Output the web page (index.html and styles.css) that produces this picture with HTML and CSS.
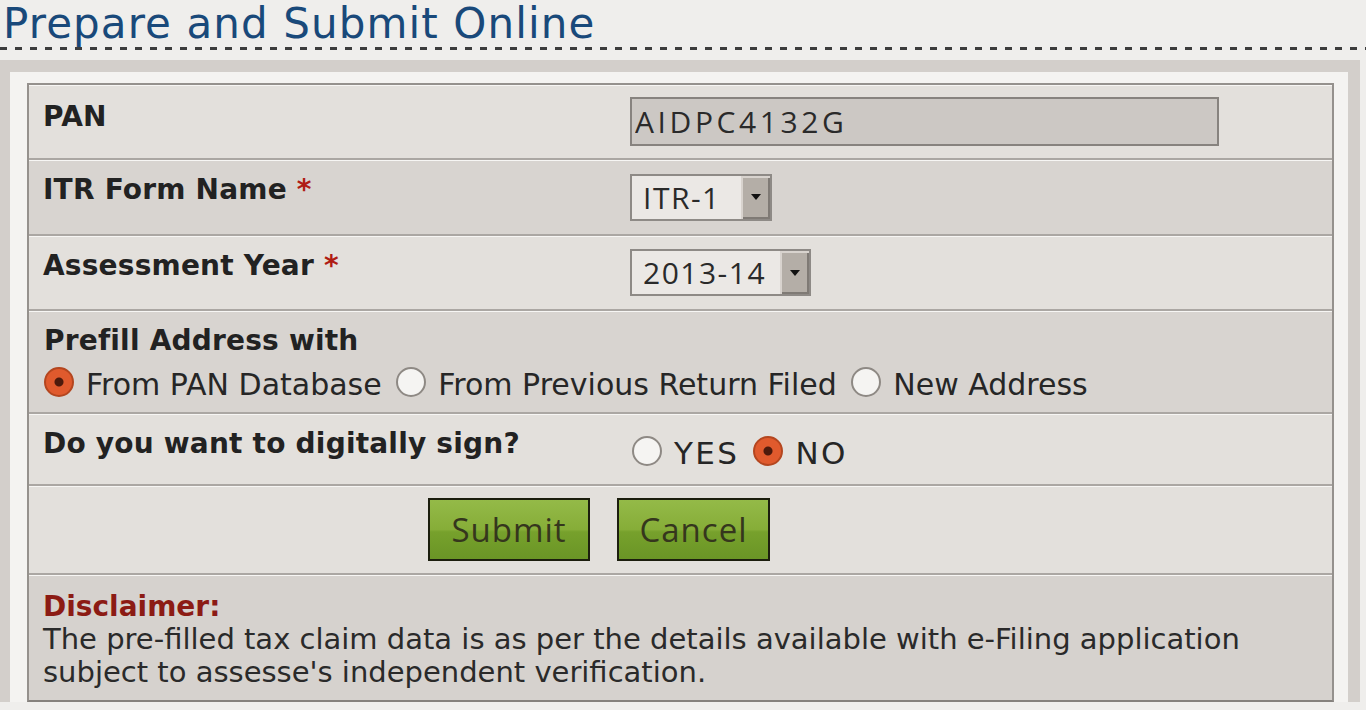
FILE: index.html
```html
<!DOCTYPE html>
<html lang="en">
<head>
  <meta charset="UTF-8">
  <title>Prepare and Submit Online</title>
  <link rel="stylesheet" href="styles.css">
</head>
<body>

  <h1 class="titulo">Prepare and Submit Online</h1>
  <div class="linea-punteada"></div>

  <div class="panel">
    <div class="tabla">

      <div class="fila clara f-pan">
        <div class="etiqueta">PAN</div>
        <div class="campo">
          <input class="pan" type="text" value="AIDPC4132G" readonly>
        </div>
      </div>

      <div class="fila oscura f-itr">
        <div class="etiqueta">ITR Form Name <span class="req">*</span></div>
        <div class="campo">
          <div class="combo combo-itr">
            <span class="valor">ITR-1</span>
            <span class="flecha"></span>
          </div>
        </div>
      </div>

      <div class="fila clara f-ay">
        <div class="etiqueta">Assessment Year <span class="req">*</span></div>
        <div class="campo">
          <div class="combo combo-ay">
            <span class="valor">2013-14</span>
            <span class="flecha"></span>
          </div>
        </div>
      </div>

      <div class="fila oscura f-dir">
        <div class="etiqueta ancha">
          Prefill Address with
          <div class="opciones">
            <label><input type="radio" name="direccion" checked>From PAN Database</label>
            <label><input type="radio" name="direccion">From Previous Return Filed</label>
            <label><input type="radio" name="direccion">New Address</label>
          </div>
        </div>
      </div>

      <div class="fila clara f-firma">
        <div class="etiqueta">Do you want to digitally sign?</div>
        <div class="campo si-no">
          <label><input type="radio" name="firma">YES</label>
          <label><input type="radio" name="firma" checked>NO</label>
        </div>
      </div>

      <div class="fila clara f-botones">
        <button class="btn-verde btn-submit">Submit</button>
        <button class="btn-verde btn-cancel">Cancel</button>
      </div>

      <div class="fila oscura f-aviso">
        <div class="aviso">
          <strong>Disclaimer:</strong><br>
          The pre-filled tax claim data is as per the details available with e-Filing application subject to assesse's independent verification.
        </div>
      </div>

    </div>
  </div>

</body>
</html>
```

FILE: styles.css
```css
* {
  box-sizing: border-box;
}
body {
  margin: 0;
  background: #efeeec;
  font-family: "DejaVu Sans", sans-serif;
  color: #262626;
}
.titulo {
  margin: 0;
  padding: 1px 0 0 3px;
  font-size: 42px;
  font-weight: normal;
  line-height: 46px;
  letter-spacing: 1.1px;
  color: #19497a;
}
.linea-punteada {
  height: 3px;
  background: repeating-linear-gradient(90deg, #3c3c3c 0 7px, transparent 7px 15px);
}
.panel {
  margin: 10px 6px 0 0;
  border: solid #d3cfcb;
  border-width: 12px 12px 0 10px;
  background: #f4f3f1;
  padding: 11px 14px 0 17px;
}
.tabla {
  border: 2px solid #95918d;
  border-bottom-color: #85817d;
}
.fila {
  display: flex;
  border-top: 2px solid #aba7a3;
  box-shadow: inset 0 1px 0 #f7f6f4;
}
.fila:first-child {
  border-top: 0;
}
.clara {
  background: #e3e0dc;
}
.oscura {
  background: #d8d4d0;
}
.f-pan { height: 73px; }
.f-itr { height: 76px; }
.f-ay { height: 75px; }
.f-dir { height: 103px; }
.f-firma { height: 72px; }
.f-botones { height: 89px; }
.f-aviso { height: 127px; background: #d6d2ce; }

.etiqueta {
  width: 601px;
  padding: 14px 0 0 14px;
  font-size: 28px;
  font-weight: bold;
  line-height: 32px;
  letter-spacing: 0.2px;
  color: #222;
}
.f-pan .etiqueta {
  padding-top: 16px;
}
.etiqueta.ancha {
  width: auto;
}
.req {
  color: #b01c14;
}
.campo {
  flex: 1;
  display: flex;
  align-items: center;
}

/* caja del PAN */
.pan {
  width: 589px;
  height: 49px;
  margin: 0;
  padding: 0 0 0 3px;
  border: 2px solid #87837f;
  background: #ccc8c4;
  font-family: "Open Sans", sans-serif;
  font-size: 30px;
  letter-spacing: 3.6px;
  color: #2a2a2a;
  outline: none;
}

/* listas desplegables */
.combo {
  display: flex;
  height: 47px;
  border: 2px solid #8e8a86;
  background: #ebe8e5;
  font-family: "Open Sans", sans-serif;
  font-size: 30px;
  color: #2a2a2a;
}
.combo-itr { width: 142px; }
.combo-ay { width: 181px; }
.combo .valor {
  flex: 1;
  padding-left: 11px;
  line-height: 43px;
  letter-spacing: 1.5px;
}
.flecha {
  width: 29px;
  display: flex;
  align-items: center;
  justify-content: center;
  background: #b4aea7;
  box-shadow: inset 2px 2px 0 #d8d3ce, inset -2px -2px 0 #7f7a75;
}
.flecha::after {
  content: "";
  border-left: 5px solid transparent;
  border-right: 5px solid transparent;
  border-top: 6px solid #111;
}

/* radios */
input[type="radio"] {
  appearance: none;
  -webkit-appearance: none;
  width: 30px;
  height: 30px;
  margin: 0 12px 0 0;
  border: 2px solid #8e8984;
  border-radius: 50%;
  background: #f5f4f2;
  vertical-align: -2px;
}
input[type="radio"]:checked {
  border-color: #b4461f;
  background: radial-gradient(circle, #4d1a0c 0 4px, #e05a2d 5px);
}
.opciones {
  margin-top: 10px;
  font-size: 30px;
  font-weight: normal;
  letter-spacing: 0;
  color: #262626;
}
.f-dir .etiqueta {
  padding-left: 15px;
}
.opciones label {
  margin-right: 5px;
}
.si-no {
  padding-left: 2px;
  padding-top: 8px;
  font-size: 31px;
  letter-spacing: 2.4px;
}
.si-no label {
  margin-right: 14px;
}

/* botones */
.f-botones {
  align-items: center;
  padding-left: 399px;
  gap: 27px;
}
.btn-verde {
  height: 63px;
  margin: 0;
  border: 2px solid #1c1e0e;
  background: linear-gradient(#94ba48, #86ad38 50%, #77a12c 54%, #6a9526);
  font-family: "Open Sans", sans-serif;
  font-size: 33px;
  letter-spacing: 1px;
  color: #35361d;
  cursor: pointer;
}
.btn-submit { width: 162px; }
.btn-cancel { width: 153px; }

/* aviso */
.aviso {
  padding: 15px 14px 0;
  font-size: 29px;
  line-height: 33px;
  color: #2a2a2a;
}
.aviso strong {
  font-size: 28px;
  color: #8c1b14;
}
```
